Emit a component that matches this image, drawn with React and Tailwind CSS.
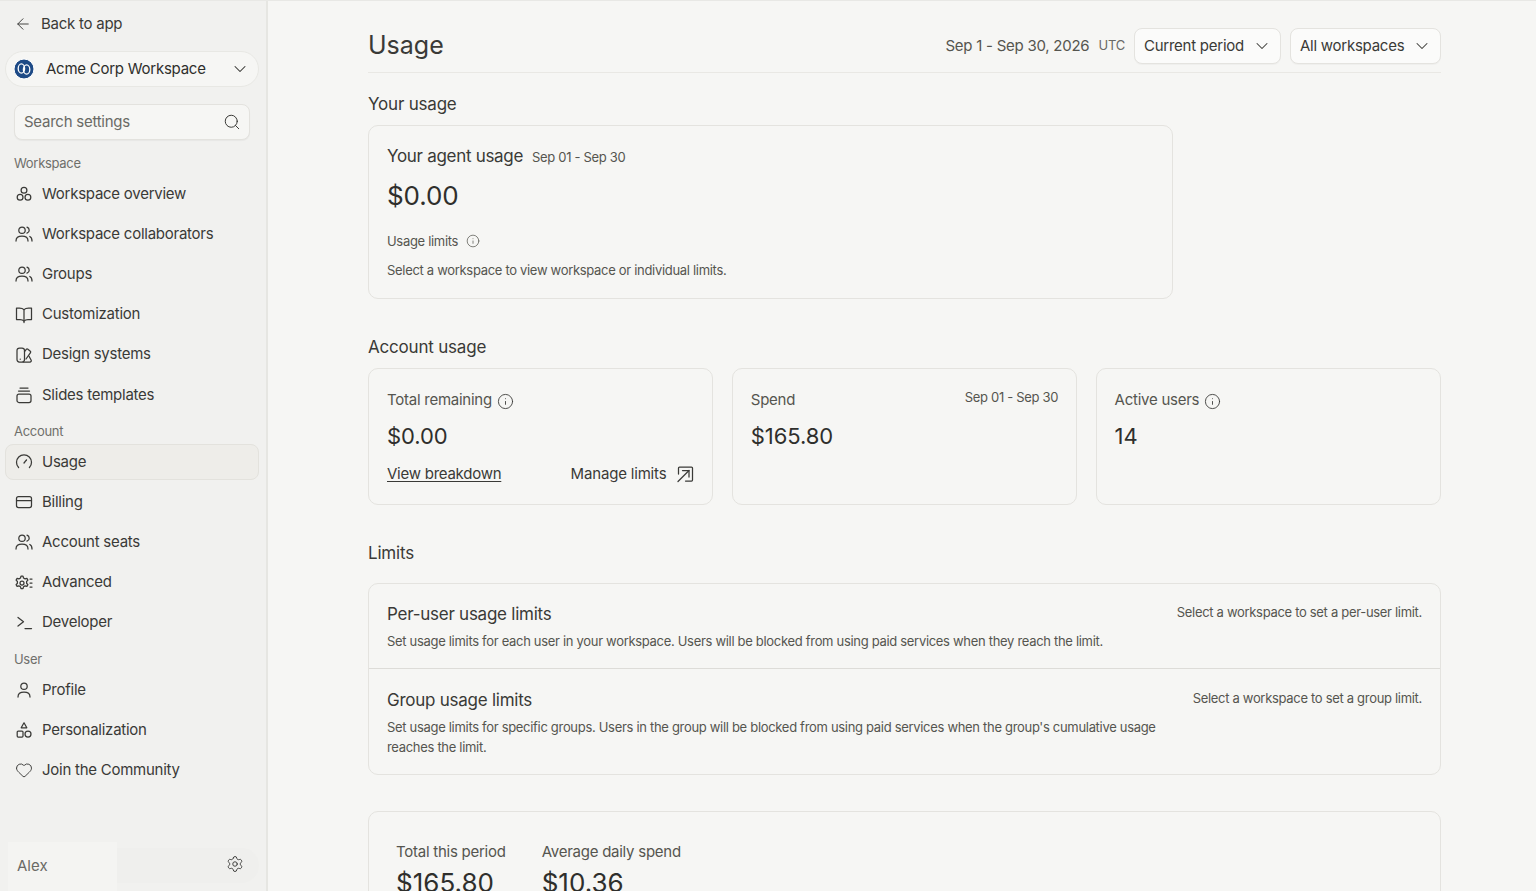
import React from 'react';
import { ArrowLeft, ChevronDown, Search, Info, Settings, Heart } from 'lucide-react';

const Ico = ({ children }) => (
  <svg width="18" height="18" viewBox="0 0 18 18" fill="none" stroke="currentColor" strokeWidth="1.25" strokeLinecap="round" strokeLinejoin="round">
    {children}
  </svg>
);

// --- sidebar icons, drawn to follow the reference ---
const OverviewIcon = () => <Ico><circle cx="9" cy="5.2" r="2.9" /><circle cx="5.1" cy="12.2" r="2.9" /><circle cx="12.9" cy="12.2" r="2.9" /></Ico>;
const PeopleIcon = () => <Ico><circle cx="7" cy="5.2" r="3.2" /><path d="M1 16c0-3.2 2.200-4.800 6-4.800s6 1.600 6 4.800" /><path d="M12 2.200c1.400.5 2.200 1.600 2.200 3s-.8 2.500-2.200 3" /><path d="M14.800 11.500c1.500.7 2.200 2.200 2.200 4.500" /></Ico>;
const BookIcon = () => <Ico><path d="M9 3.600C8 2.600 6.500 2 4.500 2H1.500v11.500h3.500c1.800 0 3.200.6 4 1.600.8-1 2.200-1.600 4-1.600h3.500V2h-3c-2 0-3.500.6-4.500 1.600z" /><path d="M9 3.600v13" /></Ico>;
const DesignIcon = () => <Ico><rect x="2" y="2" width="7.500" height="14" rx="2.500" /><path d="M9.500 5.500l1.800-2.200c.5-.5 1.100-.5 1.600-.1l2.400 2c.5.4.5 1 .2 1.500L11 13" /><path d="M8 16h7a1.300 1.300 0 0 0 1.200-1.800L14 10.200" /><path d="M5.200 13.200h.1" /></Ico>;
const SlidesIcon = () => <Ico><rect x="2" y="8" width="14" height="8.500" rx="2" /><path d="M3.500 5h11" /><path d="M5 2h8" /></Ico>;
const GaugeIcon = () => <Ico><path d="M3.600 14.500A7.500 7.500 0 1 1 14.400 14.500" /><path d="M9 10l2.500-3.200" /></Ico>;
const CardIcon = () => <Ico><rect x="1.500" y="3.500" width="15" height="11" rx="2" /><path d="M1.500 7.500h15" /></Ico>;
const AdvancedIcon = () => <Ico><circle cx="7" cy="9" r="2" /><path d="M6 2.200h2l.5 1.800 1.600.9 1.800-.5 1 1.700-1.300 1.400v1.800l1.300 1.400-1 1.700-1.800-.5-1.600.9-.5 1.800H6l-.5-1.800-1.600-.9-1.800.5-1-1.700 1.300-1.400V7.500L1.100 6.100l1-1.700 1.800.5 1.600-.9z" /><path d="M15 5h2M15 9h2M15 13h2" /></Ico>;
const DevIcon = () => <Ico><path d="M3 3.500l5.500 4.300L3 12" /><path d="M10 14.500h6.500" /></Ico>;
const ProfileIcon = () => <Ico><circle cx="9" cy="5.200" r="3.200" /><path d="M3 16c0-3.200 2.200-4.800 6-4.800s6 1.600 6 4.800" /></Ico>;
const ShapesIcon = () => <Ico><path d="M9 1.800l2.800 5H6.200z" /><rect x="2.200" y="10" width="5.800" height="6" rx="1" /><circle cx="13" cy="13" r="3" /></Ico>;
const ExternalIcon = () => (
  <svg width="18" height="18" viewBox="0 0 18 18" fill="none" stroke="currentColor" strokeWidth="1.250" strokeLinecap="round" strokeLinejoin="round">
    <path d="M2.500 9V3a1 1 0 0 1 1-1h12a1 1 0 0 1 1 1v12a1 1 0 0 1-1 1h-6" />
    <path d="M2 16.500L13 5.500" />
    <path d="M6.500 5.500H13V12" />
  </svg>
);

const Logo = () => (
  <svg width="22" height="22" viewBox="0 0 22 22" fill="none">
    <circle cx="11" cy="11" r="10" fill="#1d4a86" stroke="#ffffff" strokeWidth="1" />
    <ellipse cx="8.400" cy="10.500" rx="3.200" ry="4.600" stroke="#fff" strokeWidth="1.300" />
    <ellipse cx="13.600" cy="11.500" rx="3.200" ry="4.600" stroke="#fff" strokeWidth="1.300" />
  </svg>
);

const NavItem = ({ icon, label, active }) => (
  <div className={`flex items-center gap-[9px] h-9 pl-[9px] mt-[4.150px] first:mt-0 rounded-lg border ${active ? 'bg-[#eeede9] border-[#e3e2dd]' : 'border-transparent'}`}>
    <span className="w-[18px] flex justify-center text-[#3a3a37]">{icon}</span>
    <span className="text-[15px] tracking-[-0.25px] text-[#3a3a37]">{label}</span>
  </div>
);

const SectionLabel = ({ children }) => (
  <div className="pl-[9px] h-[18px] mb-[3px] text-[13px] tracking-[-0.3px] leading-[18px] text-[#6f6f6b]">{children}</div>
);

const Card = ({ className = '', children }) => (
  <div className={`bg-[#f6f6f4] border border-[#e4e3df] rounded-[10px] ${className}`}>{children}</div>
);

const CardLabel = ({ children }) => <span className="text-[15px] tracking-[-0.25px] leading-5 text-[#55554f]">{children}</span>;

const Small = ({ className = '', children }) => (
  <div className={`text-[13px] tracking-[-0.31px] text-[#55554f] ${className}`}>{children}</div>
);

const Heading = ({ className = '', children }) => (
  <h2 className={`text-[17px] tracking-[-0.2px] leading-[22px] font-normal text-[#3a3a37] ${className}`}>{children}</h2>
);

const Select = ({ label, width }) => (
  <div className={`flex items-center justify-between h-9 pl-[9px] pr-[8px] bg-[#fbfbfa] border border-[#e4e3df] rounded-lg shadow-[0_1px_1px_rgba(0,0,0,0.03)] text-[15px] tracking-[-0.25px] text-[#3a3a37] ${width}`}>
    {label}
    <ChevronDown size={20} strokeWidth={1.250} />
  </div>
);

const App = () => {
  return (
    <div className="h-[891px] flex overflow-hidden bg-[#f6f6f4] border-t border-[#e8e8e5] font-['Inter',sans-serif] text-[#2f2f2c]">
      {/* Sidebar */}
      <aside className="w-[268px] shrink-0 flex flex-col bg-[#f1f1ef] border-r-2 border-[#e6e6e2] pl-[5px] pr-[7px]">
        <div className="flex items-center gap-[9px] h-[22px] mt-[12px] pl-[9px] text-[15px] tracking-[-0.25px] text-[#3a3a37]">
          <ArrowLeft size={18} strokeWidth={1.250} />
          <span>Back to app</span>
        </div>
        <div className="flex items-center h-9 mt-[16px] pl-[7px] pr-[8px] bg-[#f6f6f4] border border-[#e8e8e4] rounded-full text-[15px] tracking-[-0.25px] text-[#2f2f2c]">
          <Logo />
          <span className="ml-[11px] flex-1">Acme Corp Workspace</span>
          <ChevronDown size={20} strokeWidth={1.250} />
        </div>
        <div className="flex items-center justify-between h-9 mt-[17px] mx-[9px] px-[9px] bg-[#f6f6f4] border border-[#e3e2de] rounded-lg shadow-[0_1px_1px_rgba(0,0,0,0.04)]">
          <span className="text-[15px] tracking-[-0.25px] text-[#6a6a66]">Search settings</span>
          <Search size={18} strokeWidth={1.250} className="text-[#2f2f2c] mr-[-1px]" />
        </div>
        <div className="mt-[14px]">
          <SectionLabel>Workspace</SectionLabel>
          <NavItem icon={<OverviewIcon />} label="Workspace overview" />
          <NavItem icon={<PeopleIcon />} label="Workspace collaborators" />
          <NavItem icon={<PeopleIcon />} label="Groups" />
          <NavItem icon={<BookIcon />} label="Customization" />
          <NavItem icon={<DesignIcon />} label="Design systems" />
          <NavItem icon={<SlidesIcon />} label="Slides templates" />
        </div>
        <div className="mt-[9.200px]">
          <SectionLabel>Account</SectionLabel>
          <NavItem icon={<GaugeIcon />} label="Usage" active />
          <NavItem icon={<CardIcon />} label="Billing" />
          <NavItem icon={<PeopleIcon />} label="Account seats" />
          <NavItem icon={<AdvancedIcon />} label="Advanced" />
          <NavItem icon={<DevIcon />} label="Developer" />
        </div>
        <div className="mt-[9.300px]">
          <SectionLabel>User</SectionLabel>
          <NavItem icon={<ProfileIcon />} label="Profile" />
          <NavItem icon={<ShapesIcon />} label="Personalization" />
          <NavItem icon={<Heart size={18} strokeWidth={1.250} />} label="Join the Community" />
        </div>
        <div className="mt-auto mb-[8px] flex items-start justify-between h-[35px] rounded-full bg-[#efefed] ml-[3px]">
          <div className="w-[109px] h-[49px] -mt-[6px] pl-[9px] flex items-center bg-[#f4f4f2] text-[15px] text-[#6a6a66]">Alex</div>
          <Settings size={18} strokeWidth={1.250} className="text-[#3a3a37] mt-[7px] mr-[15px]" />
        </div>
      </aside>

      {/* Main */}
      <main className="flex-1 min-w-0 pl-[100px] pr-[95px]">
        <header className="flex items-center justify-between h-[72px] pt-[19px] border-b border-[#e9e8e4]">
          <h1 className="text-[25px] font-normal text-[#3a3a37]">Usage</h1>
          <div className="flex items-center">
            <span className="text-[15px] tracking-[-0.25px] text-[#55554f]">Sep 1 - Sep 30, 2026</span>
            <span className="ml-[9px] text-[13px] tracking-[-0.2px] text-[#6a6a66]">UTC</span>
            <Select label="Current period" width="w-[147px] ml-[9px]" />
            <Select label="All workspaces" width="w-[151px] ml-[9px]" />
          </div>
        </header>

        <Heading className="mt-[20px]">Your usage</Heading>
        <Card className="w-[805px] h-[174px] mt-[10px] px-[18px] pt-[18px]">
          <div className="flex items-baseline gap-[9px]">
            <span className="text-[17px] tracking-[-0.3px] text-[#3a3a37]">Your agent usage</span>
            <Small>Sep 01 - Sep 30</Small>
          </div>
          <div className="mt-[8px] text-[26px] tracking-[-0.1px] leading-[36px] text-[#2f2f2c]">$0.00</div>
          <Small className="flex items-center gap-2 mt-[18px] leading-[18px]">
            Usage limits <Info size={14} strokeWidth={1.250} />
          </Small>
          <Small className="mt-[11px] leading-[18px]">Select a workspace to view workspace or individual limits.</Small>
        </Card>

        <Heading className="mt-[37px]">Account usage</Heading>
        <div className="grid grid-cols-3 gap-[18.400px] mt-[10px]">
          <Card className="h-[137px] px-[18px] pt-[21px]">
            <div className="flex items-center gap-[5px] h-5"><CardLabel>Total remaining</CardLabel><Info size={17} strokeWidth={1.250} className="text-[#3a3a37] mt-[2px]" /></div>
            <div className="mt-[11px] text-[22px] tracking-[-0.1px] leading-[30px]">$0.00</div>
            <div className="flex items-center justify-between mt-[12px] text-[15px] tracking-[-0.25px] text-[#3a3a37]">
              <span className="underline underline-offset-2">View breakdown</span>
              <span className="flex items-center gap-[10px] tracking-[-0.18px]">Manage limits <ExternalIcon /></span>
            </div>
          </Card>
          <Card className="h-[137px] px-[18px] pt-[21px]">
            <div className="flex items-start justify-between h-5"><CardLabel>Spend</CardLabel><Small className="leading-[18px] -mt-[2px]">Sep 01 - Sep 30</Small></div>
            <div className="mt-[11px] text-[22px] tracking-[-0.1px] leading-[30px]">$165.80</div>
          </Card>
          <Card className="h-[137px] px-[18px] pt-[21px]">
            <div className="flex items-center gap-[5px] h-5"><CardLabel>Active users</CardLabel><Info size={17} strokeWidth={1.250} className="text-[#3a3a37] mt-[2px]" /></div>
            <div className="mt-[11px] text-[22px] tracking-[-0.1px] leading-[30px]">14</div>
          </Card>
        </div>

        <Heading className="mt-[37px]">Limits</Heading>
        <Card className="mt-[19px]">
          <div className="flex justify-between h-[85px] px-[18px] pt-[19px] border-b border-[#dddcd8]">
            <div>
              <div className="text-[17px] tracking-[-0.25px] leading-[22px] text-[#3a3a37]">Per-user usage limits</div>
              <Small className="mt-[6px] leading-[20px]">Set usage limits for each user in your workspace. Users will be blocked from using paid services when they reach the limit.</Small>
            </div>
            <Small className="leading-[18px]">Select a workspace to set a per-user limit.</Small>
          </div>
          <div className="flex justify-between h-[105px] px-[18px] pt-[20px]">
            <div className="w-[790px]">
              <div className="text-[17px] tracking-[-0.25px] leading-[22px] text-[#3a3a37]">Group usage limits</div>
              <Small className="mt-[6px] leading-[20px]">Set usage limits for specific groups. Users in the group will be blocked from using paid services when the group's cumulative usage reaches the limit.</Small>
            </div>
            <Small className="leading-[18px]">Select a workspace to set a group limit.</Small>
          </div>
        </Card>

        <Card className="mt-[36px] h-[200px] px-[27px] pt-[27px]">
          <div className="flex gap-[36px]">
            <div>
              <CardLabel>Total this period</CardLabel>
              <div className="mt-[3px] text-[26px] leading-[34px]">$165.80</div>
            </div>
            <div>
              <CardLabel>Average daily spend</CardLabel>
              <div className="mt-[3px] text-[26px] leading-[34px]">$10.36</div>
            </div>
          </div>
        </Card>
      </main>
    </div>
  );
};

export default App;
